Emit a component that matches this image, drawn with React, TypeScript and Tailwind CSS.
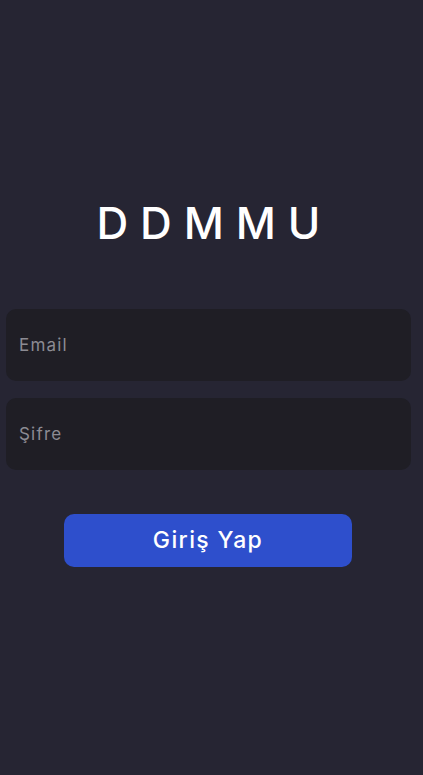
export default function App() {
  return (
    <div className="min-h-[775px] w-full bg-[#262533] flex flex-col px-[6px] pt-[195px]" style={{ fontFamily: "Inter, 'Open Sans', sans-serif" }}>
      <h1 className="text-center text-white text-[44px] leading-[56px] font-medium tracking-[0.27em] pl-[0.13em]">DDMMU</h1>
      <div className="mt-[58px] flex flex-col gap-[17px] w-[405px]">
        <input
          placeholder="Email"
          className="h-[72px] rounded-[10px] bg-[#1f1e25] px-[13px] text-[17px] tracking-[0.07em] text-white placeholder:text-[#8c8b93] outline-none"
        />
        <input
          type="password"
          placeholder="Şifre"
          className="h-[72px] rounded-[10px] bg-[#1f1e25] px-[13px] text-[17px] tracking-[0.07em] text-white placeholder:text-[#8c8b93] outline-none"
        />
      </div>
      <button className="mt-[44px] ml-[58px] w-[288px] h-[53px] rounded-[10px] bg-[#2e4fcc] text-white text-[23px] tracking-[0.06em] font-medium">
        Giriş Yap
      </button>
    </div>
  )
}
